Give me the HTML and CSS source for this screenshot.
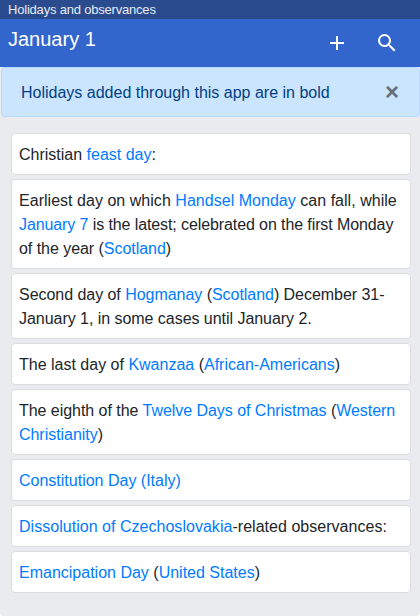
FILE: index.html
```html
<!DOCTYPE html>
<html lang="en">
<head>
<meta charset="utf-8">
<title>Holidays and observances</title>
<link rel="stylesheet" href="styles.css">
</head>
<body>
<div class="page">
<div class="status">Holidays and observances</div>
<header class="toolbar">
  <h1>January 1</h1>
  <div class="actions">
    <svg width="24" height="24" viewBox="0 0 24 24"><path d="M19 13h-6v6h-2v-6H5v-2h6V5h2v6h6v2z"/></svg>
    <svg width="24" height="24" viewBox="0 0 24 24"><path d="M15.5 14h-.79l-.28-.27A6.471 6.471 0 0 0 16 9.5 6.5 6.5 0 1 0 9.5 16c1.61 0 3.09-.59 4.23-1.57l.27.28v.79l5 4.99L20.49 19l-4.99-5zm-6 0C7.01 14 5 11.99 5 9.5S7.01 5 9.5 5 14 7.01 14 9.5 11.99 14 9.5 14z"/></svg>
  </div>
</header>
<div class="alert"><span>Holidays added through this app are in bold</span><button class="close" aria-label="Close">×</button></div>
<main class="list">
  <div class="card">Christian <a>feast day</a>:</div>
  <div class="card"><span class="wide">Earliest day on which <a>Handsel Monday</a> can fall, while</span> <span class="tight"><a>January 7</a> is the latest; celebrated on the first Monday</span> <span class="snug">of the year (<a>Scotland</a>)</span></div>
  <div class="card"><span class="snug">Second day of <a>Hogmanay</a> (<a>Scotland</a>) December 31-January 1, in some cases until January 2.</span></div>
  <div class="card">The last day of <a>Kwanzaa</a> (<a>African-Americans</a>)</div>
  <div class="card"><span class="snug">The eighth of the <a>Twelve Days of Christmas</a> (<a>Western Christianity</a>)</span></div>
  <div class="card"><a>Constitution Day (Italy)</a></div>
  <div class="card"><span class="wide"><a>Dissolution of Czechoslovakia</a>-related observances:</span></div>
  <div class="card"><a>Emancipation Day</a> (<a>United States</a>)</div>
</main>
</div>
</body>
</html>
```
FILE: styles.css
```css
* { box-sizing: border-box; }
body {
  margin: 0;
  background: #fff;
  color: #212529;
  font: 16px/24px "Liberation Sans", Arial, sans-serif;
}
.page {
  height: 616px;
  background: #eaebee;
  border-radius: 0 0 4px 4px;
}
.status {
  height: 19px;
  padding-left: 8px;
  background: #2a4b8d;
  color: #e6ecf8;
  font-size: 13px;
  line-height: 19px;
  letter-spacing: -0.2px;
}
.toolbar {
  display: flex;
  justify-content: space-between;
  height: 48px;
  padding: 0 21px 0 8px;
  background: #3366cc;
  color: #fff;
}
.toolbar h1 {
  margin: 8px 0 0;
  font-size: 20px;
  font-weight: 400;
  line-height: 24px;
}
.actions { display: flex; align-items: center; gap: 26px; }
.actions svg { fill: #fff; }
.alert {
  display: flex;
  justify-content: space-between;
  height: 50px;
  margin-left: 1px;
  padding: 13px 20px 11px 19px;
  border: 1px solid #b8daff;
  border-radius: 4px;
  background: #cce5ff;
  color: #004085;
}
.close {
  height: 24px;
  margin-top: -1px;
  padding: 0;
  border: 0;
  background: none;
  color: #666f78;
  font: 700 24px/24px "Liberation Sans", Arial, sans-serif;
}
.list {
  display: flex;
  flex-direction: column;
  gap: 4px;
  padding: 16px 9px 16px 11px;
}
.card {
  padding: 9px 8px 7px 7px;
  border: 1px solid #dcdcde;
  border-radius: 4px;
  background: #fff;
}
.card a { color: #007bff; }
.wide { letter-spacing: 0.03px; }
.tight { letter-spacing: -0.1px; }
.snug { letter-spacing: -0.04px; }
```
